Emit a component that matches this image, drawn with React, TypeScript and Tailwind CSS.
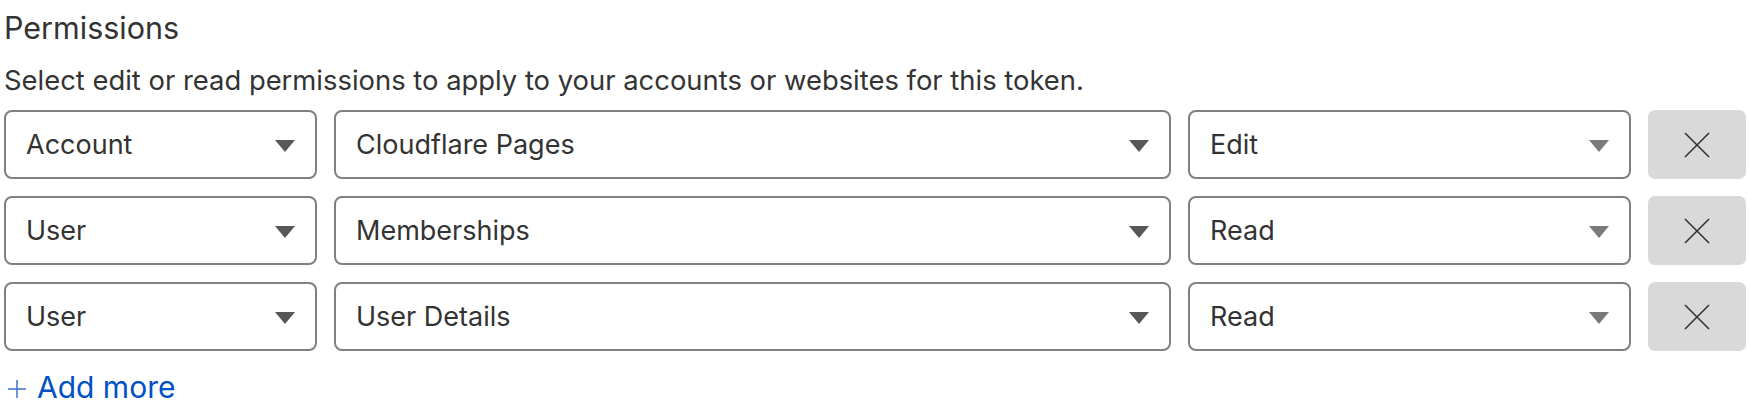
import React from "react";

const Arrow = ({ light }: { light?: boolean }) => (
  <svg width="20" height="12" viewBox="0 0 20 12" className="shrink-0 mt-[3px]">
    <polygon points="0,0 20,0 10,12" fill={light ? "#7a7a7a" : "#575757"} />
  </svg>
);

const Select = ({ label, width, light }: { label: string; width: string; light?: boolean }) => (
  <div
    className={`${width} h-full flex items-center justify-between border-2 border-[#808080] rounded-[8px] pl-[20px] pr-[20px] bg-white`}
  >
    <span className="text-[27px] leading-[34px] text-[#333]">{label}</span>
    <Arrow light={light} />
  </div>
);

const rows = [
  ["Account", "Cloudflare Pages", "Edit"],
  ["User", "Memberships", "Read"],
  ["User", "User Details", "Read"],
];

export default function App() {
  return (
    <div className="w-[1749px] h-[410px] bg-white font-['Inter',sans-serif] text-[#333] pl-[4px] overflow-hidden">
      <h2 className="text-[30.5px] leading-[40px] pt-[8px] font-normal">Permissions</h2>
      <p className="text-[27.4px] leading-[32px] mt-[16px]">
        Select edit or read permissions to apply to your accounts or websites for this token.
      </p>
      <div className="flex flex-col gap-[17px] mt-[14px]">
        {rows.map((r, i) => (
          <div key={i} className="flex gap-[17px] h-[69px]">
            <Select label={r[0]} width="w-[313px]" />
            <Select label={r[1]} width="w-[837px]" />
            <Select label={r[2]} width="w-[443px]" light />
            <button className="w-[98px] h-full bg-[#d9d9d9] rounded-[7px] flex items-center justify-center">
              <svg width="26" height="26" viewBox="0 0 26 26">
                <line x1="1" y1="1" x2="25" y2="25" stroke="#333" strokeWidth="1.6" />
                <line x1="25" y1="1" x2="1" y2="25" stroke="#333" strokeWidth="1.6" />
              </svg>
            </button>
          </div>
        ))}
      </div>
      <div className="mt-[18px] flex items-center text-[#0051c3] h-[36px]">
        <svg width="20" height="20" viewBox="0 0 20 20" className="ml-[3px] mt-[4px]">
          <line x1="10" y1="1" x2="10" y2="19" stroke="#4a78d6" strokeWidth="1.6" />
          <line x1="1" y1="10" x2="19" y2="10" stroke="#4a78d6" strokeWidth="1.6" />
        </svg>
        <span className="text-[30px] leading-[36px] ml-[10px]">Add more</span>
      </div>
    </div>
  );
}
